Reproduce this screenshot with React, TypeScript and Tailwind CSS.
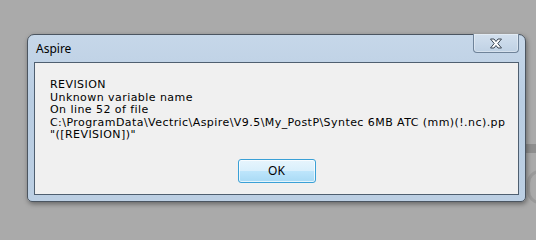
import React from 'react';

const lines = [
  'REVISION',
  'Unknown variable name',
  'On line 52 of file',
  'C:\\ProgramData\\Vectric\\Aspire\\V9.5\\My_PostP\\Syntec 6MB ATC (mm)(!.nc).pp',
  '"([REVISION])"',
];

const CloseGlyph = () => (
  <svg width="14" height="11" viewBox="0 0 14 11">
    <path
      d="M1.5 1 L5 1 L7 3.5 L9 1 L12.5 1 L8.8 5.5 L12.5 10 L9 10 L7 7.5 L5 10 L1.5 10 L5.2 5.5 Z"
      fill="#ffffff"
      stroke="#3a4654"
      strokeWidth="1"
      strokeLinejoin="round"
    />
  </svg>
);

const App: React.FC = () => {
  return (
    <div className="relative w-[536px] h-[240px] overflow-hidden bg-[#aaaaaa] pt-[34px] pl-[27px]">
      {/* bits of the window behind the dialog */}
      <div className="absolute left-[520px] top-[144px] w-[20px] h-[9px] bg-[#8e8e8e]" />
      <div className="absolute left-[527px] top-[170px] w-[26px] h-[34px] rounded-full border-[3px] border-[#9a9a9a]" />

      <div className="relative flex flex-col w-[499px] h-[168px] rounded-t-[7px] rounded-b-[5px] border border-[#4b5560] bg-[linear-gradient(to_bottom,#c6d7e9,#b9cde2_40%,#bccfe3)] shadow-[1px_2px_5px_rgba(0,0,0,0.4)]">
        <div className="flex h-[27px] shrink-0 items-start">
          <span className="pl-[8px] pt-[7px] text-[12px] leading-[14px] text-black font-['Noto_Sans',sans-serif]">
            Aspire
          </span>
          <div className="ml-auto mr-[6px] -mt-px flex h-[19px] w-[46px] items-center justify-center rounded-b-[4px] border border-t-0 border-[#6f8399] bg-[linear-gradient(to_bottom,#d3e0ee,#bfd1e4)] shadow-[inset_0_0_0_1px_rgba(255,255,255,0.35)]">
            <CloseGlyph />
          </div>
        </div>
        <div className="mx-[6px] mb-[6px] flex flex-1 flex-col border border-[#4f5f70] bg-[#f0f0f0] pl-[15px] pt-[16px] font-['DejaVu_Sans',sans-serif] text-[11px] tracking-[0.44px] text-black">
          <div className="leading-[12.5px] whitespace-pre">
            {lines.map((l) => (
              <div key={l}>{l}</div>
            ))}
          </div>
          <div className="mt-[17px] flex justify-center pr-[15px]">
            <button className="h-[24px] w-[78px] rounded-[3px] border border-[#3aa0d6] bg-[linear-gradient(to_bottom,#e7f5fd_0%,#d9effc_48%,#bde5fb_52%,#a8daf5_100%)] text-[12px] tracking-normal text-black font-['Noto_Sans',sans-serif] shadow-[inset_0_0_0_1px_rgba(255,255,255,0.7)]">
              OK
            </button>
          </div>
        </div>
      </div>
    </div>
  );
};

export default App;
